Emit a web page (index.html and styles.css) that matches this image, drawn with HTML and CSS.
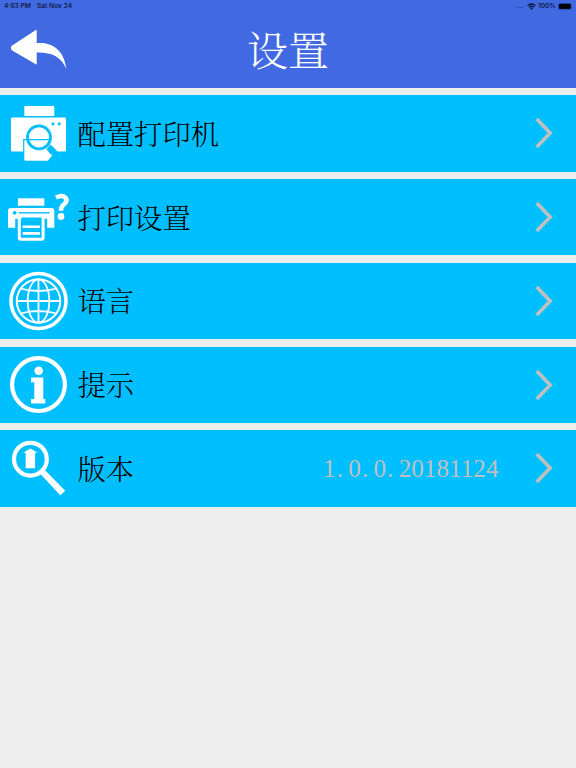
FILE: index.html
```html
<!DOCTYPE html>
<html lang="zh-CN">
<head>
    <meta charset="UTF-8">
    <meta name="viewport" content="width=device-width, initial-scale=1.0">
    <title>设置</title>
    <link rel="stylesheet" href="styles.css">
</head>
<body>
    <div class="header">
        <div class="status">
            <span class="time">4:53 PM</span>
            <span class="date">Sat Nov 24</span>
            <span class="dots">....</span>
            <svg class="wifi" width="9" height="7" viewBox="0 0 9 7">
                <path d="M.6 2.6a5.6 5.6 0 0 1 7.8 0M2.1 4.2a3.5 3.5 0 0 1 4.8 0" fill="none" stroke="#0a1233" stroke-width="1.3"/>
                <path d="M3.1 5.2a2 2 0 0 1 2.8 0L4.5 6.8z" fill="#0a1233"/>
            </svg>
            <span class="percent">100%</span>
            <svg class="battery" width="15" height="7" viewBox="0 0 15 7">
                <rect x=".3" y=".3" width="13" height="6.2" rx="1.5" fill="#22367f"/>
                <rect x="1" y="1" width="11.6" height="4.8" rx=".8" fill="#000"/>
                <path d="M13.8 2.3q1 1.1 0 2.2z" fill="#22367f"/>
            </svg>
        </div>
        <div class="bar">
            <svg class="back" width="76" height="76" viewBox="0 12 76 76">
                <path d="M36.7 30v13.2C51 42 64 49 66.2 68.8 61 57 52 52.3 36.7 52.6v12.2L11.8 50.2Q10 47.8 11.8 45.8L35.5 30.2z" fill="#fff"/>
            </svg>
            <h1 class="title">设置</h1>
        </div>
    </div>
    <ul class="list">
        <li class="item">
            <svg class="icon" viewBox="0 0 76 76">
                <rect x="24.3" y="11" width="30" height="10" rx="1" fill="#fff"/>
                <rect x="11" y="22.6" width="55" height="34" rx="1.4" fill="#fff"/>
                <path d="M24.3 45h25l3 15-4.3 5.7H25.8q-1.5 0-1.5-1.5z" fill="#fff"/>
                <path d="M23.7 57V44.6h27" fill="none" stroke="#00bfff" stroke-width="1.2"/>
                <circle cx="39" cy="42.4" r="11.5" fill="none" stroke="#00bfff" stroke-width="2.8"/>
                <path d="M46.4 54.2l4.2-4.6 7.2 7.2h-3.2l-3.4 3.2z" fill="#00bfff"/>
                <circle cx="53" cy="28.8" r="1.6" fill="#00bfff"/>
                <circle cx="59.2" cy="28.8" r="1.6" fill="#00bfff"/>
            </svg>
            <span class="name">配置打印机</span>
            <svg class="arrow" viewBox="0 0 18 32"><path d="M1.7 2 15.2 16 1.7 30"/></svg>
        </li>
        <li class="item">
            <svg class="icon" viewBox="0 0 76 76">
                <rect x="18" y="19.3" width="26.3" height="7.4" fill="#fff"/>
                <path d="M11 28.9h40.3q3 0 3 3v16.8h-7.1v-8.9h-32v8.9H8V31.9q0-3 3-3z" fill="#fff"/>
                <path d="M18.6 33.8h31" stroke="#00bfff" stroke-width="1.4"/>
                <circle cx="14.7" cy="33.8" r="1.9" fill="#00bfff"/>
                <path d="M21.6 38.6h20v3h-20z" fill="#00bfff"/>
                <path d="M19.3 39.5v19.3q0 1.5 1.5 1.5h20.8q1.5 0 1.5-1.5V39.5" fill="none" stroke="#fff" stroke-width="3"/>
                <path d="M22.7 47.7h17.2M22.7 54.4h17.2" stroke="#fff" stroke-width="2.6"/>
                <path d="M56 18.5q6.2-3 9.3.1c3.2 3.2-.8 6.2-2.9 8.2-1.5 1.4-1.4 3-1.4 4.9" fill="none" stroke="#fff" stroke-width="4.6"/>
                <circle cx="61" cy="37.5" r="3.4" fill="#fff"/>
            </svg>
            <span class="name">打印设置</span>
            <svg class="arrow" viewBox="0 0 18 32"><path d="M1.7 2 15.2 16 1.7 30"/></svg>
        </li>
        <li class="item">
            <svg class="icon" viewBox="0 0 76 76">
                <g fill="none" stroke="#fff" stroke-width="1.8">
                    <circle cx="38.5" cy="38" r="27.5" stroke-width="3.6"/>
                    <circle cx="38.5" cy="38" r="21.7" stroke-width="2"/>
                    <ellipse cx="38.5" cy="38" rx="10.8" ry="21.7"/>
                    <path d="M38.5 16.3v43.4M16.8 38h43.4M20.3 25.5q18 5 36.4 0M20.3 50.5q18-5 36.4 0"/>
                </g>
            </svg>
            <span class="name">语言</span>
            <svg class="arrow" viewBox="0 0 18 32"><path d="M1.7 2 15.2 16 1.7 30"/></svg>
        </li>
        <li class="item">
            <svg class="icon" viewBox="0 0 76 76">
                <circle cx="38.5" cy="37.6" r="26.4" fill="none" stroke="#fff" stroke-width="4.2"/>
                <circle cx="38.7" cy="23.8" r="4.3" fill="#fff"/>
                <path d="M31 30.6h12.3v21.5h2v4.4H31v-4.4h3.3V35.3H31z" fill="#fff"/>
            </svg>
            <span class="name">提示</span>
            <svg class="arrow" viewBox="0 0 18 32"><path d="M1.7 2 15.2 16 1.7 30"/></svg>
        </li>
        <li class="item">
            <svg class="icon" viewBox="0 0 76 76">
                <circle cx="30.4" cy="29.2" r="16.4" fill="none" stroke="#fff" stroke-width="4.2"/>
                <path d="M40.5 44l4.3-4L65.2 60.8l-5 4.5z" fill="#fff"/>
                <path d="M30.4 18.4l7.4 4.4h-2.7v15.4h-9.4V22.8H23z" fill="#fff"/>
            </svg>
            <span class="name">版本</span>
            <span class="version">1<i>.</i>0<i>.</i>0<i>.</i>20181124</span>
            <svg class="arrow" viewBox="0 0 18 32"><path d="M1.7 2 15.2 16 1.7 30"/></svg>
        </li>
    </ul>
</body>
</html>
```

FILE: styles.css
```css
*{box-sizing: border-box;}

body{margin: 0; background: #eee; font-family: "SimSun", "Noto Serif CJK SC", "Noto Sans CJK SC", serif;}

.header{height: 88px; background: #4169e1; color: #fff;}

.status{display: flex; align-items: center; height: 12px; padding: 0 3px 0 4px; font: 500 6.7px/12px Inter, sans-serif; color: #0a1233;}

.date{margin-left: 6px;}

.dots{margin-left: auto; color: #22367f;}

.wifi{margin: 0 2px 0 3px;}

.battery{margin-left: 2px;}

.bar{display: grid; grid-template-columns: 76px 1fr 76px; align-items: center; height: 76px;}

.title{margin: 0; padding-bottom: 3px; font-size: 41px; font-weight: 300; line-height: 73px; text-align: center;}

.list{display: grid; grid-auto-rows: 76.4px; row-gap: 7.35px; margin: 0; padding: 7.3px 0 0; list-style: none;}

.item{display: flex; align-items: center; padding-right: 23px; background: #00bfff;}

.icon{width: 76px; height: 76px; flex: none;}

.name{margin-left: 1.5px; padding-bottom: 1px; font-size: 28.3px; font-weight: 300; line-height: 74px; color: #000;}

.version{margin-left: auto; padding-top: 1px; font: 25.2px/76px "Liberation Serif", serif; color: #c0c0c0;}

.version i{display: inline-block; width: 12.6px; padding-left: 1px; font-style: normal;}

.arrow{width: 18px; height: 32px; margin-left: auto; fill: none; stroke: #c0c0c0; stroke-width: 3.6;}

.version + .arrow{margin-left: 36.5px;}
```
